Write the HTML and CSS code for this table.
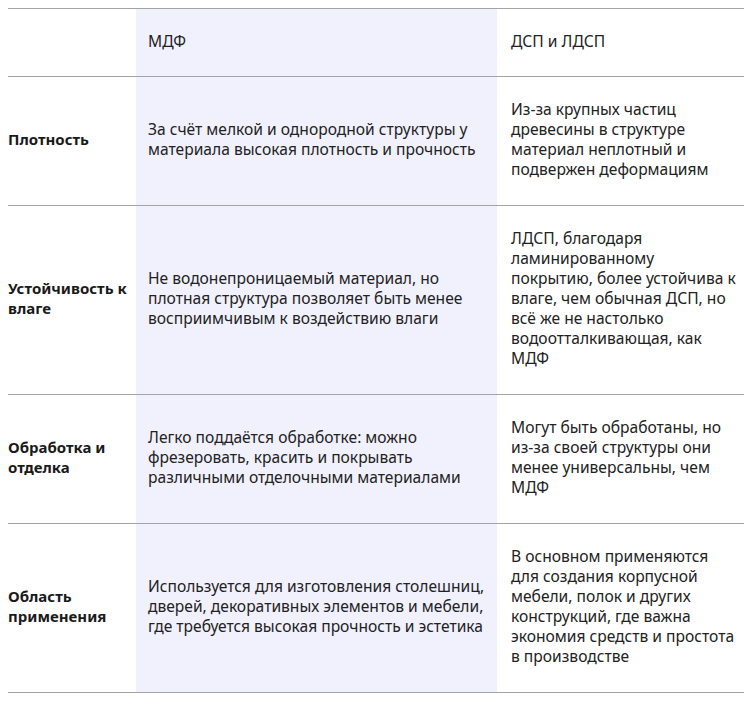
FILE: index.html
```html
<!DOCTYPE html>
<html lang="ru">
<head>
<meta charset="utf-8">
<title>МДФ и ДСП</title>
<link rel="stylesheet" href="styles.css">
</head>
<body>
<table class="compare">
  <colgroup>
    <col class="c-label">
    <col class="c-mdf">
    <col class="c-dsp">
  </colgroup>
  <thead>
    <tr>
      <th class="label"></th>
      <th class="mdf">МДФ</th>
      <th class="dsp">ДСП и ЛДСП</th>
    </tr>
  </thead>
  <tbody>
    <tr>
      <td class="label">Плотность</td>
      <td class="mdf">За счёт мелкой и однородной структуры у материала высокая плотность и прочность</td>
      <td class="dsp">Из-за крупных частиц древесины в структуре материал неплотный и подвержен деформациям</td>
    </tr>
    <tr>
      <td class="label">Устойчивость к влаге</td>
      <td class="mdf">Не водонепроницаемый материал, но плотная структура позволяет быть менее восприимчивым к воздействию влаги</td>
      <td class="dsp">ЛДСП, благодаря ламинированному покрытию, более устойчива к влаге, чем обычная ДСП, но всё же не настолько водоотталкивающая, как МДФ</td>
    </tr>
    <tr>
      <td class="label">Обработка и отделка</td>
      <td class="mdf">Легко поддаётся обработке: можно фрезеровать, красить и покрывать различными отделочными материалами</td>
      <td class="dsp">Могут быть обработаны, но из-за своей структуры они менее универсальны, чем МДФ</td>
    </tr>
    <tr>
      <td class="label">Область применения</td>
      <td class="mdf">Используется для изготовления столешниц, дверей, декоративных элементов и мебели, где требуется высокая прочность и эстетика</td>
      <td class="dsp">В основном применяются для создания корпусной мебели, полок и других конструкций, где важна экономия средств и простота в производстве</td>
    </tr>
  </tbody>
</table>
</body>
</html>
```

FILE: styles.css
```css
html, body {
  margin: 0;
  background: #ffffff;
}
body {
  padding: 8px;
  font-family: "Noto Sans", "Open Sans", sans-serif;
  font-size: 15.6px;
  line-height: 20px;
  color: #222222;
}
.compare {
  width: 736px;
  table-layout: fixed;
  border-collapse: collapse;
  border-top: 1px solid #a3a3a3;
}
.c-label { width: 128px; }
.c-mdf { width: 361px; }
.c-dsp { width: 247px; }
.compare tr {
  border-bottom: 1px solid #a3a3a3;
}
.compare th,
.compare td {
  text-align: left;
  vertical-align: middle;
  font-weight: 400;
  padding: 22px 12px 26px;
}
.compare th {
  padding-bottom: 25px;
}
.compare .label {
  padding-left: 0;
  padding-right: 4px;
  font-weight: 700;
  font-size: 15px;
  color: #1a1a1a;
}
.compare .mdf {
  background: #f1f1fd;
}
.compare .dsp {
  padding-left: 14px;
  padding-right: 4px;
}
```
